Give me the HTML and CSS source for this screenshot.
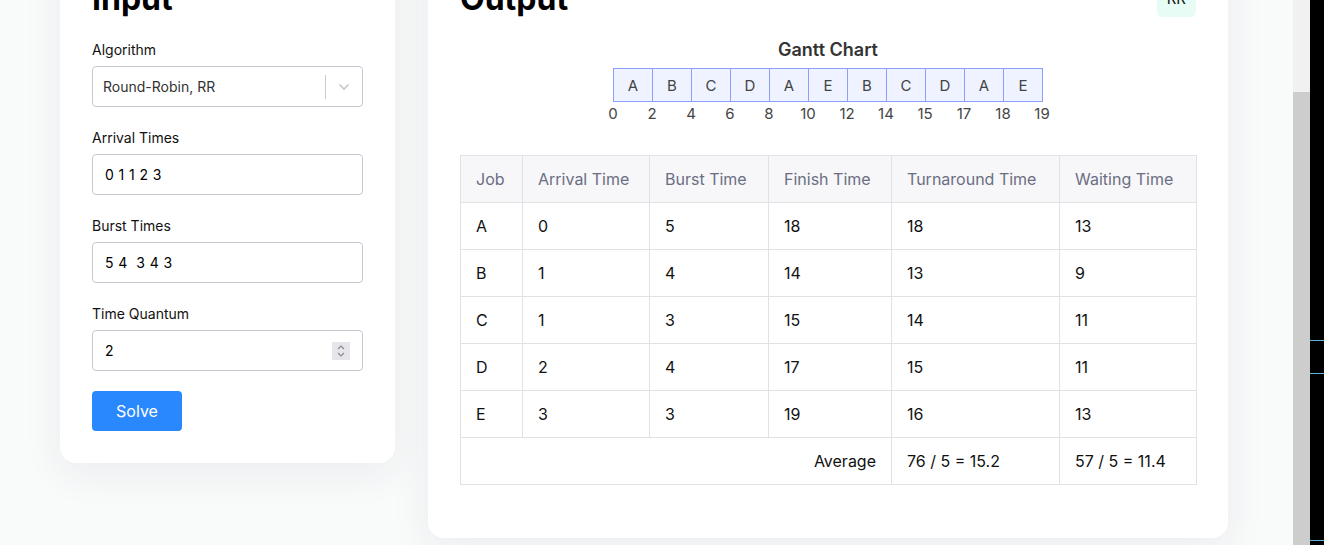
FILE: index.html
```html
<!DOCTYPE html>
<html lang="en">
<head>
<meta charset="utf-8">
<title>CPU Scheduling</title>
<link rel="stylesheet" href="styles.css">
</head>
<body>
<div class="viewport">
  <div class="page">
    <section class="card input-card">
      <h2 class="card-title">Input</h2>
      <div class="field">
        <div class="label">Algorithm</div>
        <div class="select">
          <span class="select-value">Round-Robin, RR</span>
          <span class="select-sep"></span>
          <svg class="chev" width="12" height="8" viewBox="0 0 12 8"><path d="M1.5 1.5 L6 6 L10.5 1.5" fill="none" stroke="#c8c8c8" stroke-width="1.6"/></svg>
        </div>
      </div>
      <div class="field">
        <div class="label">Arrival Times</div>
        <div class="textbox">0 1 1 2 3</div>
      </div>
      <div class="field">
        <div class="label">Burst Times</div>
        <div class="textbox">5 4  3 4 3</div>
      </div>
      <div class="field">
        <div class="label">Time Quantum</div>
        <div class="textbox number">
          <span>2</span>
          <span class="spinner">
            <svg width="18" height="18" viewBox="0 0 18 18"><path d="M6 7 L9 4 L12 7" fill="none" stroke="#8a8a92" stroke-width="1.2"/><path d="M6 11 L9 14 L12 11" fill="none" stroke="#8a8a92" stroke-width="1.2"/></svg>
          </span>
        </div>
      </div>
      <button class="solve">Solve</button>
    </section>

    <section class="card output-card">
      <div class="out-head">
        <h2 class="card-title">Output</h2>
        <span class="badge">RR</span>
      </div>
      <div class="gantt-title">Gantt Chart</div>
      <div class="gantt">
        <div class="gantt-bars">
          <div class="bar">A</div><div class="bar">B</div><div class="bar">C</div><div class="bar">D</div><div class="bar">A</div><div class="bar">E</div><div class="bar">B</div><div class="bar">C</div><div class="bar">D</div><div class="bar">A</div><div class="bar">E</div>
        </div>
        <div class="gantt-ticks">
          <span>0</span><span>2</span><span>4</span><span>6</span><span>8</span><span>10</span><span>12</span><span>14</span><span>15</span><span>17</span><span>18</span><span>19</span>
        </div>
      </div>
      <table class="results">
        <colgroup>
          <col class="c1"><col class="c2"><col class="c3"><col class="c4"><col class="c5"><col class="c6">
        </colgroup>
        <thead>
          <tr><th>Job</th><th>Arrival Time</th><th>Burst Time</th><th>Finish Time</th><th>Turnaround Time</th><th>Waiting Time</th></tr>
        </thead>
        <tbody>
          <tr><td>A</td><td>0</td><td>5</td><td>18</td><td>18</td><td>13</td></tr>
          <tr><td>B</td><td>1</td><td>4</td><td>14</td><td>13</td><td>9</td></tr>
          <tr><td>C</td><td>1</td><td>3</td><td>15</td><td>14</td><td>11</td></tr>
          <tr><td>D</td><td>2</td><td>4</td><td>17</td><td>15</td><td>11</td></tr>
          <tr><td>E</td><td>3</td><td>3</td><td>19</td><td>16</td><td>13</td></tr>
          <tr><td colspan="4" class="avg">Average</td><td>76 / 5 = 15.2</td><td>57 / 5 = 11.4</td></tr>
        </tbody>
      </table>
    </section>
  </div>
</div>
<div class="scrollbar"><div class="thumb"></div></div>
<div class="edge">
  <div class="edge-line first"></div>
  <div class="edge-line second"></div>
  <div class="edge-line third"></div>
</div>
</body>
</html>
```

FILE: styles.css
```css
* { box-sizing: border-box; }

html, body {
  margin: 0;
  padding: 0;
  height: 545px;
  overflow: hidden;
}

body {
  display: flex;
  font-family: Inter, "Noto Sans", sans-serif;
  color: #111;
  background: #f9fafb;
}

.viewport {
  width: 1293px;
  height: 545px;
  overflow: hidden;
  background: #f9fafa;
}

.page {
  margin-top: -53px;
  padding-left: 60px;
  display: flex;
  align-items: flex-start;
  gap: 33px;
}

.card {
  background: #fff;
  border-radius: 16px;
  box-shadow: 0 10px 40px rgba(30, 50, 90, 0.07);
}

.input-card {
  width: 335px;
  padding: 32px;
}

.output-card {
  width: 800px;
  padding: 32px 32px 53px;
}

.card-title {
  margin: 0 0 21px;
  font-size: 32px;
  line-height: 40px;
  font-weight: 700;
  color: #000;
}

.field + .field { margin-top: 21px; }

.label {
  font-size: 14px;
  line-height: 20px;
  margin-bottom: 6px;
  color: #111;
}

.select, .textbox {
  height: 41px;
  border: 1px solid #c9c7d2;
  border-radius: 4px;
  display: flex;
  align-items: center;
  font-size: 14px;
  background: #fff;
}

.select { padding-left: 10px; color: #333; }

.select-value { flex: 1; }

.select-sep {
  width: 1px;
  height: 24px;
  background: #cccccc;
}

.chev { margin: 0 12px 0 12px; }

.textbox {
  padding-left: 12px;
  white-space: pre;
  color: #000;
  letter-spacing: 0.4px;
}

.textbox.number { justify-content: space-between; padding-right: 12px; }

.spinner {
  width: 18px;
  height: 18px;
  background: #e6e6ea;
  display: flex;
}

.solve {
  margin-top: 20px;
  width: 90px;
  height: 40px;
  border: none;
  border-radius: 4px;
  background: #2a88ff;
  color: #fff;
  font-family: Inter, "Noto Sans", sans-serif;
  font-size: 16px;
  display: block;
}

.out-head {
  display: flex;
  justify-content: space-between;
  align-items: center;
  margin-bottom: 19px;
}

.out-head .card-title { margin: 0; }

.badge {
  background: #e6fcf5;
  color: #111;
  border-radius: 6px;
  font-size: 15px;
  line-height: 24px;
  padding: 6px 10px;
}

.gantt-title {
  text-align: center;
  font-size: 18px;
  line-height: 24px;
  font-weight: 600;
  color: #333;
  margin-bottom: 6px;
}

.gantt {
  width: 430px;
  margin: 0 auto;
}

.gantt-bars { display: flex; }

.bar {
  width: 40px;
  height: 34px;
  border: 1px solid #8c9fff;
  background: #eef3ff;
  display: flex;
  align-items: center;
  justify-content: center;
  font-size: 15px;
  color: #444;
}

.bar + .bar { margin-left: -1px; }

.gantt-ticks {
  display: flex;
  margin-left: -19.5px;
  width: 468px;
  margin-top: 2px;
}

.gantt-ticks span {
  width: 39px;
  text-align: center;
  font-size: 15px;
  line-height: 20px;
  color: #444;
}

.results {
  margin-top: 31px;
  width: 736px;
  table-layout: fixed;
  border-collapse: collapse;
  font-size: 16px;
}

.c1 { width: 62px; }
.c2 { width: 127px; }
.c3 { width: 119px; }
.c4 { width: 123px; }
.c5 { width: 168px; }
.c6 { width: 137px; }

.results th, .results td {
  border: 1px solid #e2e2e6;
  height: 47px;
  padding: 0 15px;
  text-align: left;
  font-weight: 400;
}

.results th {
  background: #f7f7f9;
  color: #6b6e82;
}

.results td { color: #111; }

.results td.avg { text-align: right; }

.scrollbar {
  width: 17px;
  height: 545px;
  background: #f1f1f1;
  display: flex;
  flex-direction: column;
}

.thumb {
  margin-top: 92px;
  flex: 1;
  background: #cdcdcd;
}

.edge {
  width: 14px;
  height: 545px;
  background: #000;
  padding-top: 340px;
}

.edge-line {
  height: 1px;
  background: #5ab4dc;
}

.edge-line.second { margin-top: 32px; }
.edge-line.third { margin-top: 166px; }
```
